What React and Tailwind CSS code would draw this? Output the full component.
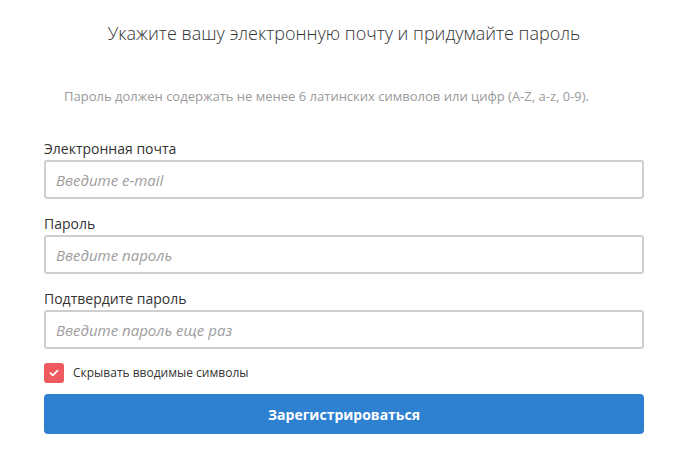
export default function App() {
  return (
    <div className="min-h-screen bg-white px-[44px] pt-[21px] text-[#333]" style={{ fontFamily: '"Open Sans", sans-serif' }}>
      <h1 className="text-center text-[18px] font-light leading-[24px] text-[#333]">
        Укажите вашу электронную почту и придумайте пароль
      </h1>
      <p className="mt-[42px] pl-[20px] text-[13px] leading-[18px] text-[#9a9a9a]">
        Пароль должен содержать не менее 6 латинских символов или цифр (A-Z, a-z, 0-9).
      </p>

      <form className="mt-[34px] flex flex-col gap-[15px]">
        <Field label="Электронная почта" placeholder="Введите e-mail" />
        <Field label="Пароль" placeholder="Введите пароль" />
        <Field label="Подтвердите пароль" placeholder="Введите пароль еще раз" />
      </form>

      <label className="mt-[14px] flex items-center gap-[9px]">
        <span className="flex h-[20px] w-[20px] items-center justify-center rounded-[3px] bg-[#ee5a5f]">
          <svg width="10" height="8" viewBox="0 0 10 8" fill="none">
            <path d="M1.5 4.2 L3.8 6.3 L8.5 1.6" stroke="white" strokeWidth="1.8" strokeLinecap="round" strokeLinejoin="round" />
          </svg>
        </span>
        <span className="text-[12px] text-[#333]">Скрывать вводимые символы</span>
      </label>

      <button
        type="button"
        className="mt-[11px] h-[40px] w-full rounded-[4px] bg-[#2e80d1] text-[14px] font-bold text-white"
      >
        Зарегистрироваться
      </button>
    </div>
  );
}

function Field({ label, placeholder }) {
  return (
    <div className="flex flex-col">
      <span className="text-[14px] leading-[20px] text-[#333]">{label}</span>
      <input
        className="mt-[1px] h-[39px] w-full rounded-[3px] border-2 border-[#cfcfcf] px-[10px] text-[15px] italic outline-none placeholder:text-[#9d9d9d]"
        placeholder={placeholder}
      />
    </div>
  );
}
